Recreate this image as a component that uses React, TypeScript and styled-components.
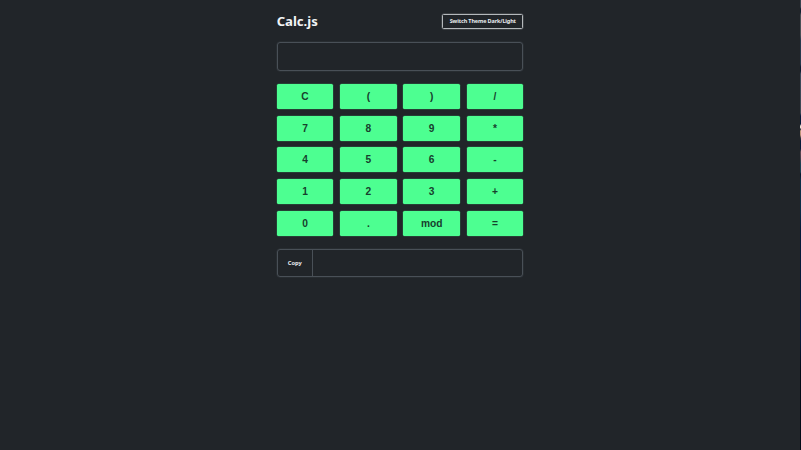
import React from "react";
import styled, { createGlobalStyle } from "styled-components";

const GlobalStyle = createGlobalStyle`
  * { box-sizing: border-box; }
  html, body { margin: 0; padding: 0; background: #212529; }
  body { overflow: hidden; }
`;

const Page = styled.div`
  display: flex;
  width: 801px;
  height: 450px;
  background: #212529;
  color: #f1f3f5;
  font-family: "Noto Sans", "Open Sans", sans-serif;
`;

const Stage = styled.div`
  flex: 1;
  display: flex;
  justify-content: center;
`;

const WindowEdge = styled.div`
  width: 1px;
  background: linear-gradient(
    to bottom,
    #38434f 0, #38434f 7px, #101e30 9px, #101e30 12px, #4a5056 15px,
    #4a5056 35px, #26394c 40px, #26394c 64px, #0b1a30 67px, #0b1a30 71px,
    #3b4a5b 74px, #3f4953 113px, #061a38 116px, #061a38 124px,
    #e6dfcf 126px, #e6dfcf 128px, #152332 129px, #c29a7d 131px,
    #b98f74 135px, #33363f 138px, #061a38 141px, #061a38 149px,
    #5b4650 152px, #473f4b 158px, #1b4052 164px, #1b4052 172px,
    #04162a 174px, #0b2d47 180px, #0b2d47 210px, #041a38 230px,
    #041a38 340px, #020b18 370px, #020b18 450px
  );
`;

const Calculator = styled.main`
  width: 246.6px;
  padding-top: 13px;
`;

const Header = styled.header`
  display: flex;
  align-items: center;
  justify-content: space-between;
  height: 16px;
  margin-bottom: 13px;
`;

const Title = styled.h1`
  margin: 0;
  font-size: 13.2px;
  line-height: 16px;
  font-weight: 700;
  letter-spacing: -0.05px;
`;

const ThemeButton = styled.button`
  width: 81px;
  height: 15px;
  padding: 0;
  border: 1px solid #b4b8bb;
  border-radius: 1.5px;
  box-shadow: 0 0 0 0.5px rgba(248, 249, 250, 0.25);
  background: transparent;
  color: #e9ecef;
  font: 700 5.5px/11px "Noto Sans", sans-serif;
  letter-spacing: -0.14px;
  white-space: nowrap;
`;

const Display = styled.div`
  display: flex;
  height: 28.5px;
  border: 1px solid #495057;
  border-radius: 3px;
  box-shadow: 0 0 0 0.5px rgba(73, 80, 87, 0.4);
`;

const Keypad = styled.div`
  display: grid;
  grid-template-columns: repeat(4, 1fr);
  grid-auto-rows: 25px;
  gap: 6.67px;
  margin: 13.4px 0 13.2px;
`;

const Key = styled.button`
  padding: 0;
  border: 0;
  border-radius: 1.5px;
  box-shadow: 0 0 0 0.5px rgba(77, 255, 145, 0.25);
  background: #4dff91;
  color: #17402d;
  font: 700 10.2px/25px "Liberation Sans", Arial, sans-serif;
`;

const CopyButton = styled.button`
  width: 35px;
  padding: 0;
  border: 0;
  border-right: 1px solid #495057;
  background: transparent;
  color: #e9ecef;
  font: 700 5.7px/26px "Noto Sans", sans-serif;
`;

const keys = [
  "C", "(", ")", "/",
  "7", "8", "9", "*",
  "4", "5", "6", "-",
  "1", "2", "3", "+",
  "0", ".", "mod", "=",
];

export default function App() {
  return (
    <>
      <GlobalStyle />
      <Page>
        <Stage>
          <Calculator>
            <Header>
              <Title>Calc.js</Title>
              <ThemeButton>Switch Theme Dark/Light</ThemeButton>
            </Header>
            <Display />
            <Keypad>
              {keys.map((key) => (
                <Key key={key}>{key}</Key>
              ))}
            </Keypad>
            <Display>
              <CopyButton>Copy</CopyButton>
            </Display>
          </Calculator>
        </Stage>
        <WindowEdge />
      </Page>
    </>
  );
}
